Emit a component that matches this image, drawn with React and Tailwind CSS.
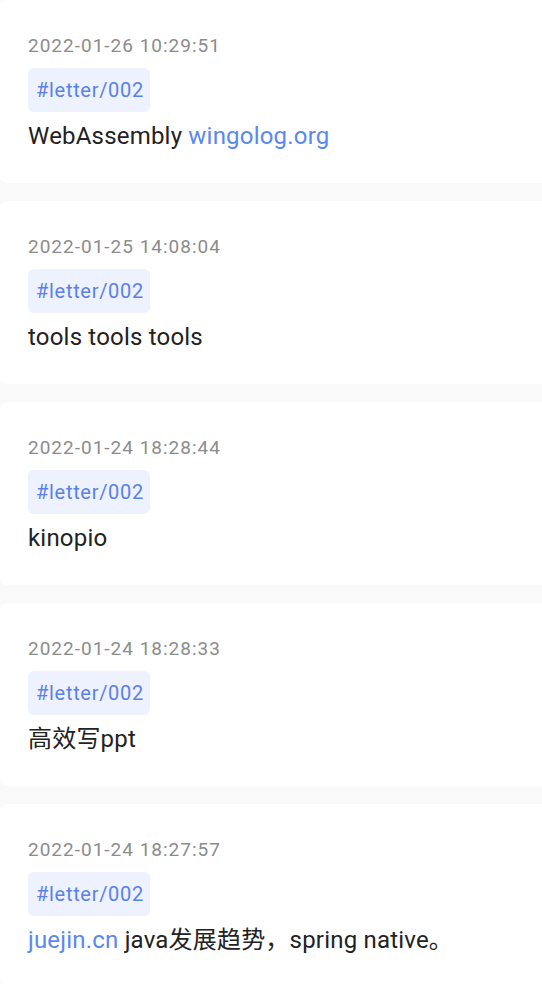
const memos = [
  {
    time: "2022-01-26 10:29:51",
    tag: "#letter/002",
    content: [
      { text: "WebAssembly " },
      { text: "wingolog.org", link: true },
    ],
  },
  { time: "2022-01-25 14:08:04", tag: "#letter/002", content: [{ text: "tools tools tools" }] },
  { time: "2022-01-24 18:28:44", tag: "#letter/002", content: [{ text: "kinopio" }] },
  { time: "2022-01-24 18:28:33", tag: "#letter/002", content: [{ text: "高效写ppt" }] },
  {
    time: "2022-01-24 18:27:57",
    tag: "#letter/002",
    content: [
      { text: "juejin.cn", link: true },
      { text: " java发展趋势，spring native。" },
    ],
  },
]

function MemoCard({ memo }) {
  return (
    <div className="bg-white rounded-lg h-[183px] w-[560px] px-7 pt-8 flex flex-col items-start">
      <p className="text-[19px] leading-[28px] tracking-[1px] text-[#8c8c8c]">{memo.time}</p>
      <span className="mt-2 h-[44px] pl-2 pr-1.5 flex items-center rounded-md bg-[#edf2fe] text-[#5b80e8] text-[20px] tracking-[0.7px]">
        {memo.tag}
      </span>
      <p className="mt-2 text-[24px] leading-[32px] tracking-[0.2px] text-[#222222]">
        {memo.content.map((part, i) =>
          part.link ? (
            <a key={i} className="text-[#5b87f0]">{part.text}</a>
          ) : (
            <span key={i}>{part.text}</span>
          )
        )}
      </p>
    </div>
  )
}

export default function App() {
  return (
    <div
      className="min-h-screen bg-[#f9f9f9] overflow-hidden"
      style={{ fontFamily: 'Roboto, "Noto Sans CJK SC", sans-serif' }}
    >
      <div className="flex flex-col gap-[18px]">
        {memos.map((memo, i) => (
          <MemoCard key={i} memo={memo} />
        ))}
      </div>
    </div>
  )
}
